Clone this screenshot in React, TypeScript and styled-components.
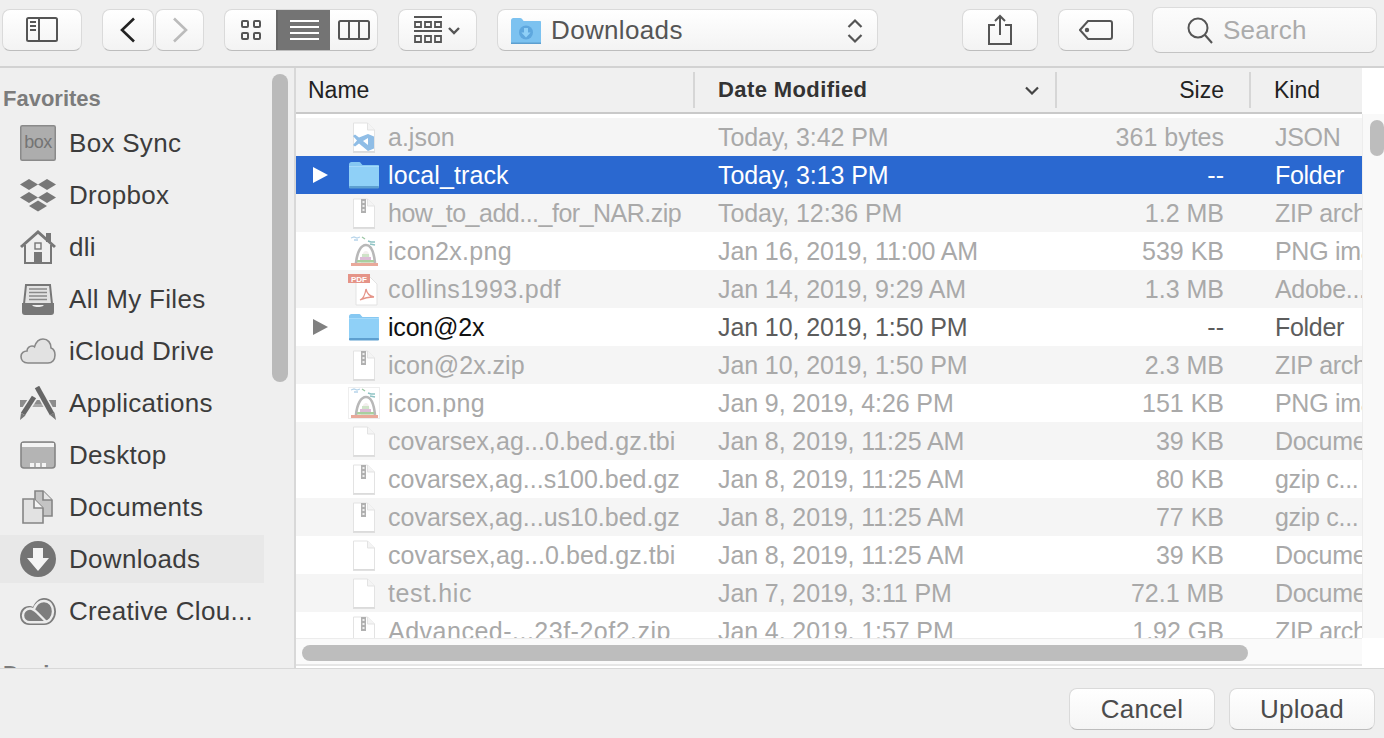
import React from 'react'
import styled, { createGlobalStyle } from 'styled-components'

type FileKind = 'json' | 'folder' | 'zip' | 'image' | 'thumb' | 'pdf' | 'doc'

type FileRow = {
  name: string,
  date: string,
  size: string,
  kind: string,
  icon: FileKind,
  track?: number,
  selected?: boolean,
}

const files: FileRow[] = [
  { name: 'a.json', date: 'Today, 3:42 PM', size: '361 bytes', kind: 'JSON', icon: 'json' },
  { name: 'local_track', date: 'Today, 3:13 PM', size: '--', kind: 'Folder', icon: 'folder', track: 0.1, selected: true },
  { name: 'how_to_add..._for_NAR.zip', date: 'Today, 12:36 PM', size: '1.2 MB', kind: 'ZIP archive', icon: 'zip', track: -0.5 },
  { name: 'icon2x.png', date: 'Jan 16, 2019, 11:00 AM', size: '539 KB', kind: 'PNG image', icon: 'image', track: 0.3 },
  { name: 'collins1993.pdf', date: 'Jan 14, 2019, 9:29 AM', size: '1.3 MB', kind: 'Adobe...', icon: 'pdf', track: 0.4 },
  { name: 'icon@2x', date: 'Jan 10, 2019, 1:50 PM', size: '--', kind: 'Folder', icon: 'folder', track: -0.2 },
  { name: 'icon@2x.zip', date: 'Jan 10, 2019, 1:50 PM', size: '2.3 MB', kind: 'ZIP archive', icon: 'zip' },
  { name: 'icon.png', date: 'Jan 9, 2019, 4:26 PM', size: '151 KB', kind: 'PNG image', icon: 'thumb', track: 0.3 },
  { name: 'covarsex,ag...0.bed.gz.tbi', date: 'Jan 8, 2019, 11:25 AM', size: '39 KB', kind: 'Document', icon: 'doc', track: 0.1 },
  { name: 'covarsex,ag...s100.bed.gz', date: 'Jan 8, 2019, 11:25 AM', size: '80 KB', kind: 'gzip c...', icon: 'zip' },
  { name: 'covarsex,ag...us10.bed.gz', date: 'Jan 8, 2019, 11:25 AM', size: '77 KB', kind: 'gzip c...', icon: 'zip' },
  { name: 'covarsex,ag...0.bed.gz.tbi', date: 'Jan 8, 2019, 11:25 AM', size: '39 KB', kind: 'Document', icon: 'doc', track: 0.1 },
  { name: 'test.hic', date: 'Jan 7, 2019, 3:11 PM', size: '72.1 MB', kind: 'Document', icon: 'doc', track: 0.6 },
  { name: 'Advanced-...23f-2of2.zip', date: 'Jan 4, 2019, 1:57 PM', size: '1.92 GB', kind: 'ZIP archive', icon: 'zip', track: 0.5 },
]

const GlobalStyle = createGlobalStyle`
  html, body {
    margin: 0;
    padding: 0;
    height: 100%;
    overflow: hidden;
    background: #efefef;
    font-family: "Liberation Sans", Arial, sans-serif;
  }
`

const Window = styled.div`
  width: 1384px;
  height: 738px;
  display: flex;
  flex-direction: column;
  background: #efefef;
  overflow: hidden;
`

const Toolbar = styled.div`
  height: 66px;
  flex: none;
  display: flex;
  align-items: center;
  gap: 20px;
  padding: 0 0 7px 2px;
  box-sizing: border-box;
`

const ToolButton = styled.div<{ $w: number, $after?: number }>`
  width: ${p => p.$w}px;
  height: 42px;
  flex: none;
  box-sizing: border-box;
  margin-right: ${p => p.$after || 0}px;
  display: flex;
  align-items: center;
  justify-content: center;
  background: linear-gradient(#ffffff, #f3f3f3);
  border: 1px solid #dadada;
  border-bottom-color: #bdbdbd;
  border-radius: 8px;
`

const NavGroup = styled.div`
  display: flex;
  flex: none;
  gap: 1px;
`

const Segments = styled.div`
  display: flex;
  flex: none;
  height: 42px;
  width: 154px;
  box-sizing: border-box;
  border: 1px solid #dadada;
  border-bottom-color: #bdbdbd;
  border-radius: 8px;
  overflow: hidden;
  background: linear-gradient(#ffffff, #f3f3f3);
`

const Segment = styled.div<{ $w: number, $active?: boolean }>`
  width: ${p => p.$w}px;
  flex: none;
  display: flex;
  align-items: center;
  justify-content: center;
  background: ${p => (p.$active ? '#747474' : 'transparent')};
  border-left: ${p => (p.$active ? '2px solid #666' : '0')};
  box-sizing: border-box;
`

const PathPopup = styled(ToolButton)`
  justify-content: flex-start;
  padding: 2px 14px 0 13px;
  color: #555;
  font-size: 26px;
  letter-spacing: 0.35px;
  gap: 10px;
`

const PathLabel = styled.span`
  flex: 1;
`

const SearchField = styled.div`
  flex: none;
  width: 225px;
  height: 46px;
  margin-left: -2px;
  box-sizing: border-box;
  display: flex;
  align-items: center;
  gap: 10px;
  padding: 2px 0 0 34px;
  color: #ababab;
  font-size: 26px;
  letter-spacing: 0.2px;
  background: linear-gradient(#fcfcfc, #f3f3f3);
  border: 1px solid #dcdcdc;
  border-bottom-color: #c4c4c4;
  border-radius: 8px;
`

const Body = styled.div`
  flex: none;
  height: 602px;
  display: flex;
  border-top: 2px solid #d2d2d2;
  box-sizing: border-box;
`

const Sidebar = styled.div`
  width: 296px;
  flex: none;
  box-sizing: border-box;
  border-right: 2px solid #d8d8d8;
  position: relative;
  overflow: hidden;
`

const SideHeading = styled.div<{ $gap: number }>`
  height: 24px;
  line-height: 24px;
  margin-top: ${p => p.$gap}px;
  padding-left: 3px;
  font-size: 22px;
  font-weight: 700;
  color: #7c7c7c;
`

const SideList = styled.div`
  display: flex;
  flex-direction: column;
  gap: 4px;
  margin-top: 8px;
  width: 264px;
`

const SideItem = styled.div<{ $active?: boolean }>`
  height: 48px;
  display: flex;
  align-items: center;
  gap: 13px;
  padding-left: 20px;
  color: #3c3c3c;
  font-size: 26px;
  letter-spacing: 0.3px;
  white-space: nowrap;
  background: ${p => (p.$active ? '#e8e8e8' : 'transparent')};
`

const SideIconSlot = styled.div`
  width: 36px;
  flex: none;
  display: flex;
  justify-content: center;
`

const SideThumb = styled.div`
  position: absolute;
  left: 272px;
  top: 6px;
  width: 16px;
  height: 308px;
  border-radius: 8px;
  background: #bababa;
`

const FilePane = styled.div`
  flex: 1;
  min-width: 0;
  display: flex;
  flex-direction: column;
  background: #fff;
`

const TableWrap = styled.div`
  height: 570px;
  flex: none;
  display: flex;
`

const Table = styled.div`
  width: 1066px;
  flex: none;
  overflow: hidden;
`

const HeaderRow = styled.div`
  height: 46px;
  display: grid;
  grid-template-columns: 399px 362px 194px 111px;
  background: #f0f0f0;
  border-bottom: 2px solid #c9c9c9;
  box-sizing: border-box;
  color: #222;
  font-size: 23px;
`

const HeaderCell = styled.div<{ $right?: boolean, $divider?: boolean, $left: number, $pad?: number }>`
  display: flex;
  align-items: center;
  justify-content: ${p => (p.$right ? 'flex-end' : 'space-between')};
  padding-left: ${p => p.$left}px;
  padding-right: ${p => p.$pad || 0}px;
  margin: 4px 0;
  box-sizing: border-box;
  border-right: ${p => (p.$divider ? '2px solid #d6d6d6' : '0')};
`

const SortedLabel = styled.span`
  font-weight: 700;
  font-size: 22px;
  letter-spacing: 0.4px;
  color: #333;
`

const Rows = styled.div`
  padding-top: 4px;
`

const Row = styled.div<{ $tone: string }>`
  height: 38px;
  display: grid;
  grid-template-columns: 399px 362px 194px 111px;
  align-items: center;
  font-size: 25px;
  white-space: nowrap;
  background: ${p => p.$tone};
`

const NameCell = styled.div<{ $color: string }>`
  display: flex;
  align-items: center;
  color: ${p => p.$color};
  padding-left: 17px;
  height: 38px;
`

const NameText = styled.span<{ $track: number }>`
  letter-spacing: ${p => p.$track}px;
`

const Disclosure = styled.div`
  width: 35px;
  flex: none;
  display: flex;
  align-items: center;
`

const IconSlot = styled.div`
  width: 32px;
  flex: none;
  display: flex;
  justify-content: center;
  margin-right: 8px;
`

const DateCell = styled.div<{ $color: string }>`
  padding-left: 23px;
  letter-spacing: -0.1px;
  color: ${p => p.$color};
`

const SizeCell = styled.div<{ $color: string }>`
  padding-right: 27px;
  text-align: right;
  color: ${p => p.$color};
`

const KindCell = styled.div<{ $color: string }>`
  padding-left: 24px;
  letter-spacing: -0.3px;
  color: ${p => p.$color};
  overflow: hidden;
`

const VerticalTrack = styled.div`
  flex: 1;
  position: relative;
  margin-top: 46px;
  background: #f9f9f9;
  border-left: 1px solid #ededed;
`

const VerticalThumb = styled.div`
  position: absolute;
  right: 0;
  top: 6px;
  width: 14px;
  height: 36px;
  border-radius: 7px;
  background: #bdbdbd;
`

const HorizontalTrack = styled.div`
  height: 30px;
  flex: none;
  display: flex;
`

const HorizontalLane = styled.div`
  width: 1066px;
  height: 28px;
  padding: 6px 0 0 6px;
  box-sizing: border-box;
  background: #fafafa;
  border-top: 1px solid #ececec;
  border-bottom: 2px solid #e6e6e6;
`

const HorizontalThumb = styled.div`
  width: 946px;
  height: 16px;
  border-radius: 8px;
  background: #bdbdbd;
`

const Footer = styled.div`
  flex: 1;
  display: flex;
  align-items: flex-start;
  justify-content: flex-end;
  gap: 14px;
  padding: 19px 9px 0 0;
  box-sizing: border-box;
  border-top: 1px solid #d8d8d8;
`

const DialogButton = styled.div`
  width: 146px;
  height: 42px;
  box-sizing: border-box;
  display: flex;
  align-items: center;
  justify-content: center;
  color: #4c4c4c;
  font-size: 26px;
  letter-spacing: 0.3px;
  background: linear-gradient(#ffffff, #f5f5f5);
  border: 1px solid #dadada;
  border-bottom-color: #bdbdbd;
  border-radius: 8px;
`

const FolderIcon = () => (
  <svg width={32} height={28} viewBox="0 0 32 28">
    <path d="M1 3.500C1 2 2 1 3.500 1h7c1.200 0 2 .5 2.600 1.400L14.500 4H30c.6 0 1 .4 1 1v21c0 .6-.4 1-1 1H2c-.6 0-1-.4-1-1z" fill="#86c8f2" />
    <rect x="1" y="6" width="30" height="20" fill="#8fd0f7" />
    <rect x="1" y="25" width="30" height="2.400" rx="1" fill="#5d9fd0" />
    <rect x="1" y="5" width="30" height="1" fill="#a5dafa" />
  </svg>
)

const DownloadsFolderIcon = () => (
  <svg width={30} height={26} viewBox="0 0 30 26">
    <path d="M0 2.500C0 1 1 0 2.400 0h6.500c1 0 1.800.4 2.400 1.200L12.600 3H29c.6 0 1 .4 1 1v21c0 .6-.4 1-1 1H1c-.6 0-1-.4-1-1z" fill="#7cc2f0" />
    <rect x="0" y="24.500" width="30" height="1.500" fill="#5d9fd0" />
    <circle cx="15" cy="14.500" r="7" fill="#5ea7de" />
    <path d="M13 10h4v4.500h2.600L15 19.400l-4.600-4.900H13z" fill="#8fd0f7" />
  </svg>
)

const PageShape = ({ children }: { children?: React.ReactNode }) => (
  <svg width={24} height={31} viewBox="0 0 24 31">
    <path d="M1.500 1h14l7 7v21.500h-21z" fill="#fff" stroke="#e3e3e3" strokeWidth="1" />
    <path d="M15.500 1v7h7" fill="#f4f4f4" stroke="#e3e3e3" strokeWidth="1" />
    <rect x="1" y="29.500" width="22" height="1.200" fill="#d4d4d4" />
    {children}
  </svg>
)

const ZipperMark = () => (
  <g>
    <rect x="9" y="1" width="5" height="14" fill="#b0b0b0" />
    <rect x="10.500" y="3" width="2" height="2" fill="#eee" />
    <rect x="10.500" y="7" width="2" height="2" fill="#eee" />
    <rect x="10.500" y="11" width="2" height="2" fill="#eee" />
  </g>
)

const ArchImage = ({ framed }: { framed?: boolean }) => (
  <svg width={32} height={32} viewBox="0 0 32 32">
    {framed && <rect x=".5" y=".5" width="31" height="31" fill="#fff" stroke="#eeeeee" />}
    <path d="M3 3l3-1 3 1 3-1M6 5l4 0" fill="none" stroke="#b7d4ea" strokeWidth="1.300" />
    <path d="M14 2l3 2" stroke="#9cc7a6" strokeWidth="1.300" />
    <path d="M20 6l3 1 4 0M22 9l5 1" fill="none" stroke="#8fc3c4" strokeWidth="1.500" />
    <path d="M8 28C9 17 13 10 18 10s8 8 9 18" fill="none" stroke="#b8b8b8" strokeWidth="2.600" />
    <path d="M13 28c0-7 2-12 5-12s4 5 4 12z" fill="#f3eeee" />
    <path d="M14 19h7v3h-7z" fill="#cfe3c8" />
    <path d="M12 22h11v3H12z" fill="#dcbcd6" />
    <path d="M9 25h17v2.500H9z" fill="#a9cf9f" />
    <path d="M3 28h27v3H3z" fill="#e9a99a" />
  </svg>
)

const FileIcon = ({ kind }: { kind: FileKind }) => {
  if (kind === 'folder') return <FolderIcon />
  if (kind === 'image') return <ArchImage />
  if (kind === 'thumb') return <ArchImage framed />
  if (kind === 'zip') return <PageShape><ZipperMark /></PageShape>
  if (kind === 'json') {
    return (
      <PageShape>
        <path d="M16 12l6 2.500v12L16 29 7 21.500l-4 3L1 23l4-4.500L1 14l2-1.500 4 3z" fill="#8fbde6" />
        <path d="M16 16l-5 3 5 4z" fill="#fff" />
      </PageShape>
    )
  }
  if (kind === 'pdf') {
    return (
      <svg width={32} height={33} viewBox="0 0 32 33">
        <path d="M8 3h13l8 8v21H8z" fill="#fff" stroke="#e3e3e3" />
        <rect x="0" y="1" width="22" height="9" fill="#e59488" />
        <text x="3" y="8.500" fontSize="8" fontWeight="700" fill="#fff" fontFamily="Liberation Sans">PDF</text>
        <path d="M12 27c3-1 5-5 6-11 1 5 3 7 8 8-5 0-10 1-14 3z" fill="none" stroke="#e59488" strokeWidth="1.300" />
      </svg>
    )
  }
  return <PageShape />
}

const SideIcon = ({ name }: { name: string }) => {
  switch (name) {
    case 'box':
      return (
        <svg width={36} height={36} viewBox="0 0 36 36">
          <rect x=".75" y=".75" width="34.500" height="34.500" rx="1.500" fill="#adadad" stroke="#8a8a8a" strokeWidth="1.500" />
          <text x="18" y="23" textAnchor="middle" fontSize="18" letterSpacing="-.5" fill="#747474" fontFamily="Liberation Sans">box</text>
        </svg>
      )
    case 'dropbox':
      return (
        <svg width={36} height={33} viewBox="0 0 36 33" fill="#777">
          <path d="M9 0l9 5.500L9 11 0 5.500z" />
          <path d="M27 0l9 5.500-9 5.500-9-5.500z" />
          <path d="M9 13l9 5.500L9 24l-9-5.500z" />
          <path d="M27 13l9 5.500-9 5.500-9-5.500z" />
          <path d="M18 21.500l9 5.500-9 5.500-9-5.500z" />
        </svg>
      )
    case 'home':
      return (
        <svg width={36} height={34} viewBox="0 0 36 34">
          <path d="M5 15v18h26V15" fill="#efefef" stroke="#777" strokeWidth="2" />
          <path d="M1 17L18 2l17 15" fill="none" stroke="#777" strokeWidth="3" />
          <rect x="26" y="3" width="5" height="9" fill="#777" />
          <rect x="15" y="13" width="6" height="6" fill="none" stroke="#777" strokeWidth="1.400" />
          <rect x="14" y="22" width="8" height="11" fill="#777" />
        </svg>
      )
    case 'files':
      return (
        <svg width={32} height={32} viewBox="0 0 32 32">
          <path d="M4 2h24l2 19H2z" fill="#e3e3e3" stroke="#777" strokeWidth="2" />
          <path d="M7 6h18M7 9.500h18M7 13h18M7 16.500h18" stroke="#8a8a8a" strokeWidth="1.500" />
          <path d="M0 20h9c1 3 3 4 7 4s6-1 7-4h9v9c0 2-1 3-3 3H3c-2 0-3-1-3-3z" fill="#777" />
        </svg>
      )
    case 'cloud':
      return (
        <svg width={36} height={26} viewBox="0 0 36 26">
          <path d="M8 25C3 25 1 22 1 18.500S4 13 7 13c0-3 2.500-5 5-5 1 0 2 .3 2.500.8C16 4 19.500 1 23 1c5 0 8 4 8 9 3 1 4 4 4 7 0 5-3 8-7 8z" fill="#e2e2e2" stroke="#888" strokeWidth="1.600" />
        </svg>
      )
    case 'apps':
      return (
        <svg width={36} height={34} viewBox="0 0 36 34">
          <path d="M0 14h36v7H0z" fill="#8c8c8c" />
          <path d="M10 18h16v3H10z" fill="#a8a8a8" />
          <path d="M14 11L3 28" stroke="#efefef" strokeWidth="8" />
          <path d="M17 1l15 27" stroke="#efefef" strokeWidth="8" />
          <path d="M14 11L3 28" stroke="#666" strokeWidth="5" />
          <path d="M17 1l15 27" stroke="#666" strokeWidth="5" />
          <path d="M1 27l4.500 2.500L0 34zM30 29l4.500-2.500L36 34z" fill="#777" />
        </svg>
      )
    case 'desktop':
      return (
        <svg width={36} height={28} viewBox="0 0 36 28">
          <rect x="1" y="1" width="34" height="26" rx="3" fill="#b4b4b4" stroke="#858585" strokeWidth="1.600" />
          <rect x="2" y="2" width="32" height="4" fill="#f4f4f4" />
          <path d="M10 22h4v4h-4zM16 22h4v4h-4zM22 22h4v4h-4z" fill="#f4f4f4" />
        </svg>
      )
    case 'documents':
      return (
        <svg width={32} height={34} viewBox="0 0 32 34">
          <path d="M13 1h8l9 9v16H13z" fill="#c4c4c4" stroke="#858585" strokeWidth="1.600" />
          <path d="M21 1v9h9" fill="#e6e6e6" stroke="#858585" strokeWidth="1.600" />
          <path d="M1 9h11l9 9v15H1z" fill="#e2e2e2" stroke="#858585" strokeWidth="1.600" />
          <path d="M12 9v9h9" fill="#f4f4f4" stroke="#858585" strokeWidth="1.600" />
        </svg>
      )
    case 'downloads':
      return (
        <svg width={36} height={36} viewBox="0 0 36 36">
          <circle cx="18" cy="18" r="18" fill="#747474" />
          <path d="M13 7h10v10h6L18 30 7 17h6z" fill="#f4f4f4" />
        </svg>
      )
    default:
      return (
        <svg width={36} height={27} viewBox="0 0 36 27" fill="none">
          <path d="M9 27C4 27 0 23 0 17.500S4 8 9 8c1.500 0 3 .4 4 1C15 4 19 0 24 0c7 0 12 6 12 13.500S31 27 24 27z" fill="#7d7d7d" />
          <path d="M24 24.300H10c-4 0-7-3-7-6.800s3-7 7-7c3 0 5 2 7 4l5 5c2 2 3 3 4.500 4.800" stroke="#ececec" strokeWidth="2.400" />
          <path d="M14 11c2-5 6-8 10-8 6 0 9 5 9 10.500S29 24.300 24 24.300" stroke="#ececec" strokeWidth="2.400" />
        </svg>
      )
  }
}

const sideItems = [
  { icon: 'box', label: 'Box Sync' },
  { icon: 'dropbox', label: 'Dropbox' },
  { icon: 'home', label: 'dli' },
  { icon: 'files', label: 'All My Files' },
  { icon: 'cloud', label: 'iCloud Drive' },
  { icon: 'apps', label: 'Applications' },
  { icon: 'desktop', label: 'Desktop' },
  { icon: 'documents', label: 'Documents' },
  { icon: 'downloads', label: 'Downloads' },
  { icon: 'cc', label: 'Creative Clou...' },
]

const rowTone = (row: FileRow, index: number) => {
  if (row.selected) return '#2a68d0'
  return index % 2 === 0 ? '#f5f5f5' : '#ffffff'
}

export default function App() {
  return (
    <Window>
      <GlobalStyle />
      <Toolbar>
        <ToolButton $w={80}>
          <svg width={32} height={25} viewBox="0 0 32 25" fill="none" stroke="#555" strokeWidth="2">
            <rect x="1" y="1" width="30" height="23" rx="1.500" />
            <path d="M13 1v23" />
            <path d="M4 5h6M4 9h6M4 13h6" strokeWidth="1.800" />
          </svg>
        </ToolButton>
        <NavGroup>
          <ToolButton $w={52}>
            <svg width={16} height={26} viewBox="0 0 16 26" fill="none" stroke="#222" strokeWidth="2.600">
              <path d="M14 1.500L2 13l12 11.500" />
            </svg>
          </ToolButton>
          <ToolButton $w={49}>
            <svg width={16} height={26} viewBox="0 0 16 26" fill="none" stroke="#bbb" strokeWidth="2.600">
              <path d="M2 1.500L14 13 2 24.500" />
            </svg>
          </ToolButton>
        </NavGroup>
        <Segments>
          <Segment $w={51}>
            <svg width={20} height={20} viewBox="0 0 20 20" fill="none" stroke="#555" strokeWidth="2">
              <rect x="1" y="1" width="6" height="6" rx="1" />
              <rect x="13" y="1" width="6" height="6" rx="1" />
              <rect x="1" y="13" width="6" height="6" rx="1" />
              <rect x="13" y="13" width="6" height="6" rx="1" />
            </svg>
          </Segment>
          <Segment $w={54} $active>
            <svg width={29} height={20} viewBox="0 0 29 20" stroke="#fff" strokeWidth="2">
              <path d="M0 1h29M0 7h29M0 13h29M0 19h29" />
            </svg>
          </Segment>
          <Segment $w={47}>
            <svg width={32} height={20} viewBox="0 0 32 20" fill="none" stroke="#555" strokeWidth="2">
              <rect x="1" y="1" width="30" height="18" rx="1.500" />
              <path d="M11 1v18M21 1v18" />
            </svg>
          </Segment>
        </Segments>
        <ToolButton $w={79}>
          <svg width={47} height={28} viewBox="0 0 47 28" fill="none" stroke="#555">
            <path d="M0 1h28M0 15h28" strokeWidth="2" />
            <path d="M1 6h6v5H1zM11 6h6v5h-6zM21 6h6v5h-6zM1 20h6v6H1zM11 20h6v6h-6zM21 20h6v6h-6z" strokeWidth="1.800" />
            <path d="M35 12l5 5 5-5" strokeWidth="2.400" />
          </svg>
        </ToolButton>
        <PathPopup $w={381} $after={64}>
          <DownloadsFolderIcon />
          <PathLabel>Downloads</PathLabel>
          <svg width={16} height={26} viewBox="0 0 16 26" fill="none" stroke="#555" strokeWidth="2.200">
            <path d="M1.500 9L8 2.500 14.500 9M1.500 17L8 23.500 14.500 17" />
          </svg>
        </PathPopup>
        <ToolButton $w={76}>
          <svg width={24} height={31} viewBox="0 0 24 31" fill="none" stroke="#555" strokeWidth="2">
            <path d="M7 11H1v19h22V11h-6" />
            <path d="M12 21V2M7 7l5-5 5 5" />
          </svg>
        </ToolButton>
        <ToolButton $w={76}>
          <svg width={34} height={20} viewBox="0 0 34 20" fill="none" stroke="#555" strokeWidth="2">
            <path d="M9 1h22c1.200 0 2 .8 2 2v14c0 1.200-.8 2-2 2H9l-8-9z" />
            <circle cx="8" cy="10" r="1.200" fill="#555" />
          </svg>
        </ToolButton>
        <SearchField>
          <svg width={26} height={28} viewBox="0 0 26 28" fill="none" stroke="#555" strokeWidth="2">
            <circle cx="11" cy="11" r="9.500" />
            <path d="M18 18l7 8" />
          </svg>
          Search
        </SearchField>
      </Toolbar>
      <Body>
        <Sidebar>
          <SideHeading $gap={19}>Favorites</SideHeading>
          <SideList>
            {sideItems.map(item => (
              <SideItem key={item.icon} $active={item.icon === 'downloads'}>
                <SideIconSlot><SideIcon name={item.icon} /></SideIconSlot>
                {item.label}
              </SideItem>
            ))}
          </SideList>
          <SideHeading $gap={27}>Devices</SideHeading>
          <SideThumb />
        </Sidebar>
        <FilePane>
          <TableWrap>
            <Table>
              <HeaderRow>
                <HeaderCell $left={12} $divider>Name</HeaderCell>
                <HeaderCell $left={23} $pad={16} $divider>
                  <SortedLabel>Date Modified</SortedLabel>
                  <svg width={14} height={9} viewBox="0 0 14 9" fill="none" stroke="#444" strokeWidth="2.200">
                    <path d="M1 1.500l6 6 6-6" />
                  </svg>
                </HeaderCell>
                <HeaderCell $left={0} $pad={25} $right $divider>Size</HeaderCell>
                <HeaderCell $left={23}>Kind</HeaderCell>
              </HeaderRow>
              <Rows>
                {files.map((row, i) => {
                  const isFolder = row.icon === 'folder'
                  const nameColor = row.selected ? '#fff' : isFolder ? '#111' : '#a9a9a9'
                  const metaColor = row.selected ? '#fff' : isFolder ? '#5c5c5c' : '#a9a9a9'
                  return (
                    <Row key={row.name + i} $tone={rowTone(row, i)}>
                      <NameCell $color={nameColor}>
                        <Disclosure>
                          {isFolder && (
                            <svg width={15} height={16} viewBox="0 0 15 16">
                              <path d="M0 0l15 8-15 8z" fill={row.selected ? '#fff' : '#808080'} />
                            </svg>
                          )}
                        </Disclosure>
                        <IconSlot><FileIcon kind={row.icon} /></IconSlot>
                        <NameText $track={row.track || 0}>{row.name}</NameText>
                      </NameCell>
                      <DateCell $color={metaColor}>{row.date}</DateCell>
                      <SizeCell $color={metaColor}>{row.size}</SizeCell>
                      <KindCell $color={metaColor}>{row.kind}</KindCell>
                    </Row>
                  )
                })}
              </Rows>
            </Table>
            <VerticalTrack><VerticalThumb /></VerticalTrack>
          </TableWrap>
          <HorizontalTrack>
            <HorizontalLane><HorizontalThumb /></HorizontalLane>
          </HorizontalTrack>
        </FilePane>
      </Body>
      <Footer>
        <DialogButton>Cancel</DialogButton>
        <DialogButton>Upload</DialogButton>
      </Footer>
    </Window>
  )
}
